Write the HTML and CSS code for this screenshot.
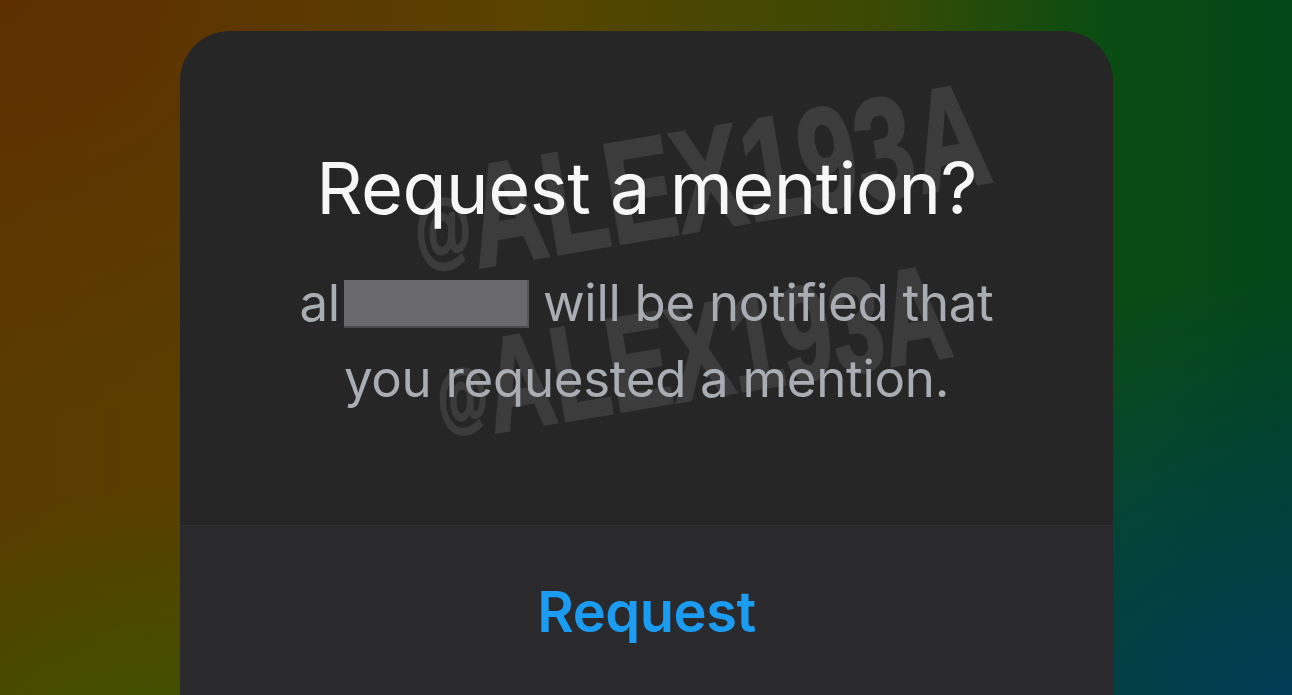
FILE: index.html
```html
<!DOCTYPE html>
<html lang="en">
  <head>
    <meta charset="UTF-8" />
    <meta name="viewport" content="width=device-width, initial-scale=1.0" />
    <title>Request a mention?</title>
    <link rel="stylesheet" href="styles.css">
  </head>
  <body>
    <div class="dialog">
      <div class="watermark wm-one"><span class="at">@</span>ALEX193A</div>
      <div class="watermark wm-two"><span class="at">@</span>ALEX193A</div>
      <div class="dialog-body">
        <h1 class="title">Request a mention?</h1>
        <p class="message">al<span class="redact"></span> will be notified that you requested a mention.</p>
      </div>
      <div class="dialog-actions">
        <button class="action">Request</button>
      </div>
    </div>
  </body>
</html>
```

FILE: styles.css
```css
html, body {
  height: 100%;
}
body {
  margin: 0;
  overflow: hidden;
  font-family: Inter, Roboto, "Noto Sans", sans-serif;
  background-color: #4f4600;
  background-image:
    radial-gradient(ellipse 700px 420px at 100% 100%, #003c55 0%, rgba(0, 60, 85, 0) 100%),
    radial-gradient(ellipse 420px 260px at 12% 108%, #3c5400 0%, rgba(60, 84, 0, 0) 100%),
    radial-gradient(ellipse 560px 420px at 0% 0%, #5e3000 0%, rgba(94, 48, 0, 0) 100%),
    linear-gradient(to right, #5a3c00 0%, #594400 40%, #3a4a03 68%, #0a4d12 85%, #034618 100%);
  display: flex;
  justify-content: center;
}
.dialog {
  position: relative;
  width: 933px;
  margin-top: 31px;
  margin-left: 1px;
  border-radius: 50px 50px 0 0;
  overflow: hidden;
  background: #262626;
  align-self: flex-start;
}
.dialog-body {
  position: relative;
  height: 494px;
  box-sizing: border-box;
  padding-top: 115px;
  text-align: center;
}
.title {
  margin: 0;
  font-size: 72px;
  font-weight: 400;
  line-height: 84px;
  color: #f7f7f7;
  letter-spacing: -0.5px;
}
.message {
  margin: 35px auto 0;
  width: 720px;
  font-size: 51px;
  line-height: 76px;
  color: #a8acb3;
  letter-spacing: -0.3px;
}
.redact {
  display: inline-block;
  width: 185px;
  height: 48px;
  margin-left: 4px;
  vertical-align: -7px;
  background: #69696b;
  border-bottom: 2px solid #4a4a4c;
  border-right: 2px solid #55555a;
  box-sizing: border-box;
}
.dialog-actions {
  position: relative;
  border-top: 1px solid #333336;
  background: #2a2a2d;
  height: 200px;
  display: flex;
  justify-content: center;
  padding-top: 51px;
  box-sizing: border-box;
}
.action {
  background: none;
  border: none;
  padding: 0;
  font-family: inherit;
  font-size: 56px;
  font-weight: 600;
  line-height: 70px;
  color: #1a9cf2;
  align-self: flex-start;
  letter-spacing: -0.5px;
}
.watermark {
  position: absolute;
  font-family: "Liberation Sans", Arial, sans-serif;
  font-weight: 700;
  line-height: 1;
  color: #3c3c3c;
  -webkit-text-stroke: 3px #3c3c3c;
  white-space: nowrap;
  pointer-events: none;
}
.watermark .at {
  font-size: 0.56em;
  vertical-align: 0.2em;
}
.wm-one {
  left: 242px;
  top: 124px;
  font-size: 145px;
  transform-origin: 0 123px;
  transform: rotate(-9.5deg) scaleX(0.715);
}
.wm-two {
  left: 264px;
  top: 297px;
  font-size: 134px;
  transform-origin: 0 113px;
  transform: rotate(-9.5deg) scaleX(0.69);
}
```
